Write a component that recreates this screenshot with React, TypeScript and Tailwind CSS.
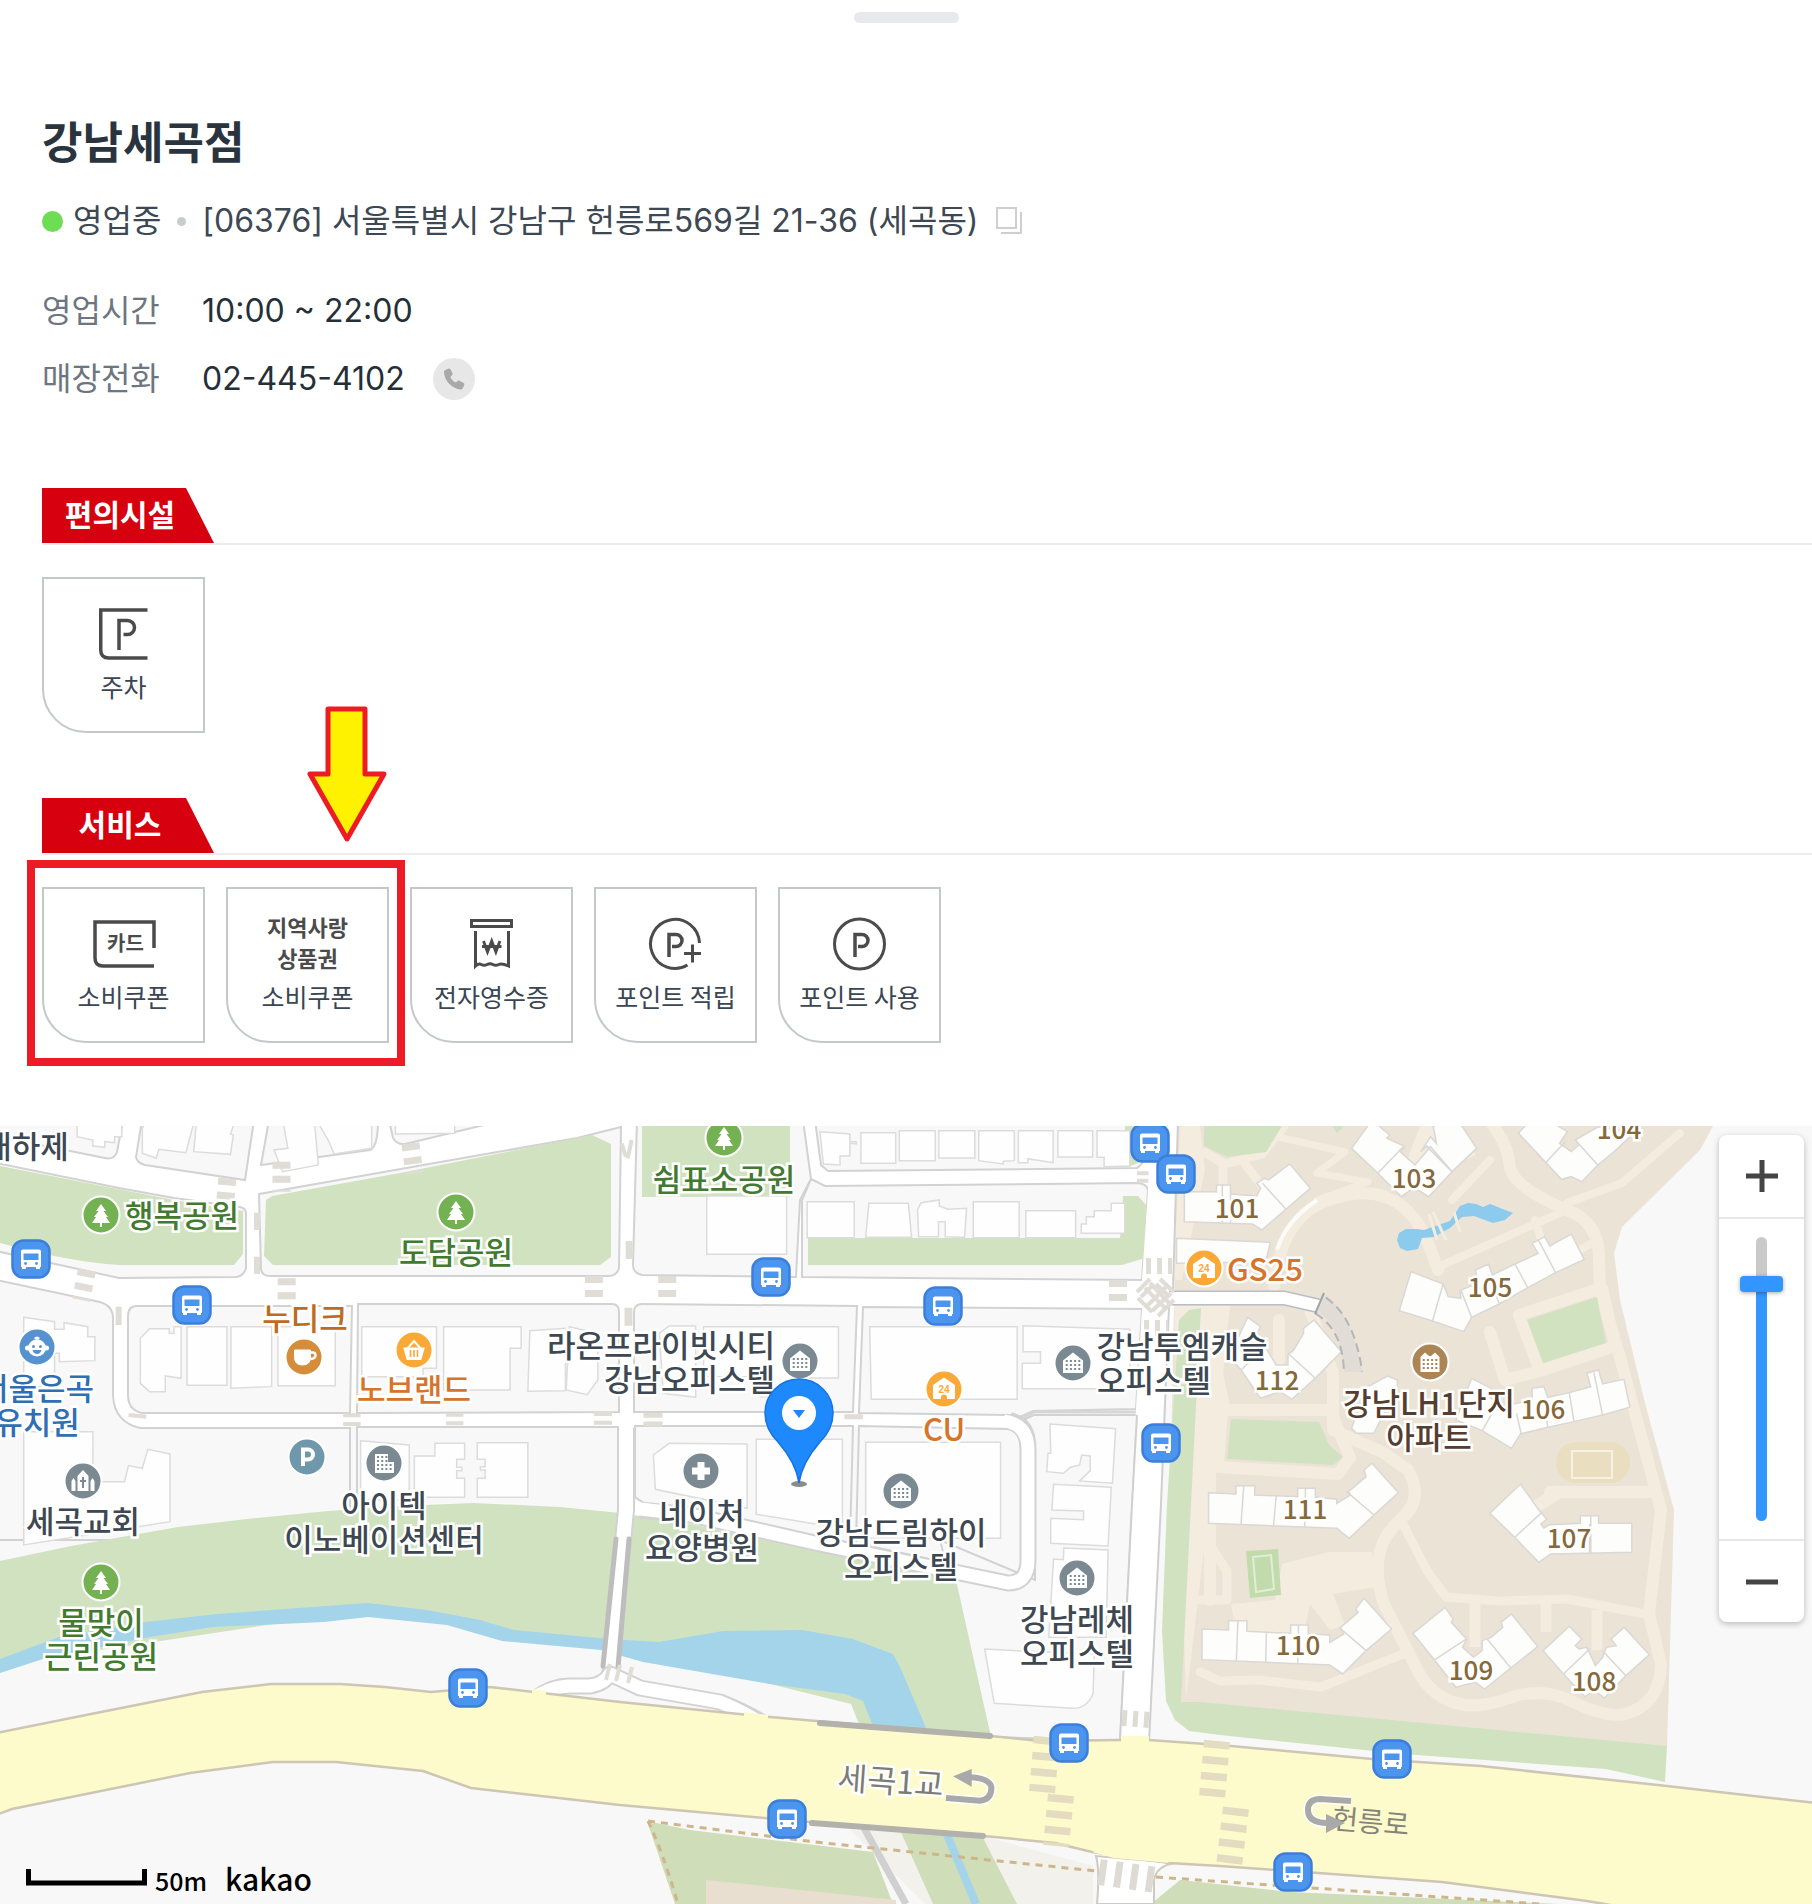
import type { ReactNode } from "react";

const SANS = "font-['Inter','Noto_Sans_CJK_KR',sans-serif]";
const KR = "font-['Noto_Sans_CJK_KR',sans-serif]";

/* ---------- store details ---------- */

function CopyIcon() {
  return (
    <svg viewBox="0 0 28 28" className="size-7" fill="none" stroke="#cfcfcf" strokeWidth="2">
      <rect x="2" y="1" width="19" height="20" />
      <path d="M26 5v21H6" />
    </svg>
  );
}

function PhoneIcon() {
  return (
    <svg viewBox="0 0 24 24" className="size-6" fill="#a9a9a9">
      <path d="M3 3.2 6.5 1.5c.7-.3 1.4 0 1.8.6l2.2 4.2c.3.6.2 1.300-.3 1.800L8.300 10c1 2.300 3 4.400 5.500 5.600l1.900-1.700c.5-.5 1.200-.6 1.800-.2l4.200 2.400c.6.4.900 1.100.6 1.800l-1.700 3.600c-.3.600-.9 1-1.600 1C10.200 22.200 2 13.600 2 4.800c0-.7.400-1.300 1-1.600Z" />
    </svg>
  );
}

function SectionHead({ title }: { title: string }) {
  return (
    <div className="h-[57px] border-b-2 border-[#ececee]">
      <h2
        className={`${KR} flex h-[55px] w-[172px] items-center justify-center bg-[#d7000f] pr-4 pb-1.5 text-[30px] leading-none font-bold whitespace-nowrap text-white [clip-path:polygon(0_0,144px_0,100%_100%,0_100%)]`}
      >
        {title}
      </h2>
    </div>
  );
}

function Card({ label, children }: { label: string; children: ReactNode }) {
  return (
    <li className="flex h-[156px] w-[163px] flex-col items-center rounded-bl-[44px] border-2 border-[#c5c8cb] pt-[23px]">
      <div className="flex h-[64px] items-center justify-center text-[#4b4b4b]">{children}</div>
      <span className={`${KR} mt-0.5 text-[25px] leading-9 whitespace-nowrap text-[#3a4653]`}>{label}</span>
    </li>
  );
}

const line = { fill: "none", stroke: "#4b4b4b", strokeWidth: 3.5 };

const ParkingIcon = () => (
  <svg viewBox="0 0 50 52" className="h-[52px] w-[50px]" {...line}>
    <path d="M48.500 2H1.750v40q0 8 8 8h38.750" />
    <path d="M20 42V12.500h8.500a7 7 0 0 1 0 14h-4" />
  </svg>
);

const CardIcon = () => (
  <div className="relative flex h-12 w-16 items-center justify-center">
    <svg viewBox="0 0 64 48" className="absolute inset-0" {...line}>
      <path d="M62 28V2H3v36q0 8 8 8h51" />
    </svg>
    <span className={`${KR} pb-0.5 pl-1 text-[20px] leading-none font-bold`}>카드</span>
  </div>
);

const VoucherIcon = () => (
  <div className={`${KR} pb-1 text-center text-[22px] leading-[31px] font-bold whitespace-nowrap`}>
    지역사랑
    <br />
    상품권
  </div>
);

const ReceiptIcon = () => (
  <svg viewBox="0 0 44 52" className="h-[52px] w-11" {...line} strokeWidth="3">
    <rect x="1.500" y="2.500" width="40" height="6" />
    <path d="M5.500 13v35q3-3 5.800-1.500t5.800 0 5.800 0 5.800 0T38.500 48V13" />
    <path d="m13.500 23 4 11 4.200-11 4.200 11 4-11M12 28.500h19.500" strokeWidth="2.800" />
  </svg>
);

const PointAddIcon = () => (
  <svg viewBox="0 0 56 54" className="h-[54px] w-14" {...line}>
    <path d="M51.500 26A24.500 24.500 0 1 0 39.500 48" strokeWidth="3" />
    <path d="M21 40V17.500h7a6 6 0 0 1 0 12h-4" />
    <path d="M44.500 27.500v18M36 36.500h17" strokeWidth="3" />
  </svg>
);

const PointIcon = () => (
  <svg viewBox="0 0 54 54" className="size-[54px]" {...line}>
    <circle cx="26.500" cy="27" r="25" strokeWidth="3" />
    <path d="M22 40V17.500h7a6 6 0 0 1 0 12h-4" />
  </svg>
);

/* ---------- map artwork ---------- */

function Tile({ x, y, kx, children }: { x: number; y: number; kx: number; children: ReactNode }) {
  return (
    <g transform={`translate(${x} ${y}) scale(${kx} .3333)`} className="[&_*]:[vector-effect:non-scaling-stroke]">
      {children}
    </g>
  );
}
const W = 0.3954;
const E = 0.3908;

const G = "#d1e2c1";
const bldg = { fill: "#fefefe", stroke: "#dcdcdc", strokeWidth: 1.500 };
const house = { fill: "#fdfdfc", stroke: "#dad8d4", strokeWidth: 1.500 };
const cross = { fill: "none", stroke: "#e0dcd6", strokeWidth: 18, strokeDasharray: "7 7" };

function MapArt() {
  return (
    <svg
      viewBox="0 1126 1812 778"
      preserveAspectRatio="xMinYMin slice"
      className="absolute inset-0 size-full"
      aria-hidden="true"
    >
      <rect y="1126" width="1812" height="778" fill="#f8f8f8" />
      <path d="M0 1126H1180V1300L1160 1427H0Z" fill="#fff" />

      {/* city blocks */}
      <g fill="#f8f8f8" stroke="#d2d2d2" strokeWidth="2">
        <path d="M-4 1120H123L117 1152Q114 1160 105 1158L55 1148L-4 1136Z" />
        <path d="M142 1120L136 1157Q137 1163 145 1165L245 1180L254 1120Z" />
        <path d="M269 1120L261 1165L370 1150Q378 1147 378 1120Z" />
        <path d="M389 1120L393 1138Q397 1145 405 1144L505 1120Z" />
        <path d="M-4 1163L119 1188L174 1198L240 1207Q246 1208 246 1214V1268Q244 1276 236 1277L119 1278L-4 1251Z" />
        <path d="M259 1194L395 1170L577 1138L621 1127L619 1268Q617 1276 608 1276H270Q261 1276 261 1268Z" />
        <path d="M637 1120H803L811 1179L800 1200L796 1277L642 1275Q633 1273 633 1265Z" />
        <path d="M815 1120L821 1165L828 1171L1137 1168Q1148 1163 1151 1120Z" />
        <path d="M811 1179L825 1186L1138 1183Q1147 1184 1148 1190L1142 1280L802 1277V1200Z" />
        <path d="M-4 1280L100 1302Q113 1306 113 1318V1395Q114 1422 140 1428H350V1540H-4Z" />
        <path d="M137 1306H352L350 1413H142Q128 1410 128 1395V1316Q128 1306 137 1306Z" />
        <path d="M358 1304H612Q619 1304 619 1312V1412L357 1413Z" />
        <path d="M634 1312Q634 1304 642 1304L857 1306L853 1412H634Z" />
        <path d="M863 1307L1142 1309L1136 1409L1033 1411L1020 1417L1010 1415L859 1413Z" />
        <path d="M357 1427H619V1540H357Z" />
        <path d="M635 1426H853L850 1543L750 1526L651 1508L635 1497Z" />
        <path d="M859 1426L1008 1429Q1021 1432 1021 1450V1565Q1018 1577 1007 1576L856 1543Z" />
        <path d="M1023 1420L1034 1415H1137L1120 1741L990 1737L940 1540L1035 1580V1445Z" />
      </g>

      {/* parks and river banks */}
      <g fill={G}>
        <path d="M0 1166L174 1200L243 1211V1254L234 1265H119Q70 1262 0 1243Z" />
        <path d="M266 1200L272 1196L400 1173L592 1135L611 1144V1257L600 1265H273L264 1256Z" />
        <path d="M642 1126H790V1197H642Z" />
        <path d="M808 1238H1120L1123 1196H1138L1146 1205L1145 1258L1122 1265H808Z" />
        <path d="M1125 1126H1146V1160L1125 1168Z" />
        <path d="M0 1561L71 1546L178 1527L257 1518L328 1511L400 1506L474 1503L560 1507L620 1513L632 1515L691 1524L815 1551L956 1580L991 1737L859 1724L851 1704L770 1684L600 1645L368 1610L0 1665Z" />
      </g>
      <path
        fill="#a3d4ea"
        d="M0 1659L59 1637L146 1622L217 1614L368 1603L427 1610L480 1620L514 1630L609 1639L659 1642L723 1631L802 1630L853 1639L893 1654L900 1667L927 1730L873 1726L863 1701L845 1694L770 1684L643 1662L601 1650L502 1641L447 1625L368 1617L324 1622L213 1627L150 1637L43 1659L0 1673Z"
      />

      {/* north-west buildings */}
      <Tile x={0} y={1120} kx={W}>
        <g {...bldg}>
          <path d="M195 0V50L235 60V78L265 82V65L290 68V50H308V0Z" />
          <path d="M372 0L360 25V100L395 115L402 88L470 98L492 0Z" />
          <path d="M497 0L490 95L583 103L590 45L583 42L595 0Z" />
          <path d="M715 0L728 85L693 90L715 155L805 135L795 0Z" />
          <path d="M800 0L830 60L845 102L940 85V0Z" />
          <path d="M1000 0V42L1150 40V0Z" />
          <path d="M60 592L138 605V628H162V608L222 620V650H240V722L150 725V700H138V800H60Z" />
          <path d="M378 626H428V640H440V620H458V775L418 768V815H378L355 790V655Z" />
          <path d="M473 620H574V796H473ZM584 620H687V800L584 805ZM703 620H848V797H703Z" />
          <path d="M915 620H1104V745H1070V770H915Z" />
          <path d="M1122 620H1318V685H1290V810H1122Z" />
          <path d="M1340 632L1430 625V812L1335 814ZM1440 620L1512 640V780L1485 824L1432 810Z" />
          <path d="M60 935H235V1085H315L325 1037L360 1045L374 988L430 1002V1205L60 1275Z" />
          <path d="M912 962L1035 975V1140H912ZM1048 1008H1100V970H1175V1018H1155V1042H1168V1052H1155V1075H1175V1132H1048ZM1207 968H1335V1132H1207V1075H1227V1050H1215V1040H1227V1018H1207Z" />
        </g>
        <g {...cross}>
          <path d="M575 175L570 240M712 125V215M1038 70L1048 160M220 450L205 540M725 475V552M1502 468V550" />
          <path d="M868 886H912M1128 884H1172M1502 882H1548M325 885L370 890" strokeDasharray="none" strokeWidth="4" />
          <path d="M650 278V330M650 410V462M300 560V615" strokeDasharray="none" strokeWidth="6" />
          <path d="M868 912H912M1128 910H1172M1502 908H1548" strokeDasharray="none" strokeWidth="4" />
        </g>
      </Tile>

      {/* north-centre buildings */}
      <Tile x={600} y={1120} kx={W}>
        <g {...bldg}>
          <path d="M556 35L632 42V65H648V72L632 70V108H607V135L565 132Z" />
          <path d="M660 38H748V130H660ZM757 32H848V122H757ZM857 32H948V114H857ZM958 32H1048V122L1020 124V132L958 122ZM1058 32H1146V128L1082 116V128H1058ZM1158 32H1246V111H1158ZM1257 32H1340V138L1275 140V112H1257Z" />
          <path d="M524 245H643V353H524ZM680 250H780L788 352H672ZM803 270L812 248L858 240V258L880 268L927 265L922 352L873 350V305H856V350H806ZM944 245H1060V353H944ZM1077 272H1203V353H1077ZM1217 312H1230V290H1250V272H1293V250H1327V340H1217Z" />
          <path d="M270 228H472V403H270Z" />
          <path d="M150 640L175 618H242V832L160 820ZM262 620H603V774H500V832L405 830V770H262Z" />
          <path d="M682 620H1055V838H686Z" />
          <path d="M1070 617L1340 628V806H1068V730H1114V695H1070Z" />
          <path d="M135 1005L175 970L372 972V1165L140 1108Z" />
          <path d="M395 958H613V1225L395 1183Z" />
          <path d="M672 967H1013V1255H672Z" />
          <path d="M1138 912L1304 926L1296 1090L1213 1083L1240 1052V1008L1218 1005L1213 1035L1190 1042L1172 1060L1130 1055L1133 1000H1140Z" />
          <path d="M1147 1093L1293 1102L1285 1278L1140 1270V1195L1223 1199V1173L1143 1170Z" />
        </g>
        <g {...cross}>
          <path d="M170 468V550M1310 480V565" />
          <path d="M65 390H82M62 590H82" strokeDasharray="none" />
          <path d="M70 908V985M110 886H158M110 912H158M618 890H665" strokeDasharray="none" strokeWidth="5" />
          <path d="M55 70L65 110M80 60L70 115M1358 160H1410M1358 182H1400" strokeDasharray="none" strokeWidth="4" />
        </g>
      </Tile>

      {/* side streets */}
      <g fill="none" strokeLinejoin="round">
        <path d="M640 1510L691 1515L815 1543L1008 1583Q1028 1583 1028 1560V1450Q1028 1424 1010 1421" stroke="#d2d2d2" strokeWidth="17" />
        <path d="M632 1508L691 1515L815 1543L1008 1583Q1028 1583 1028 1560V1450Q1028 1424 1004 1421" stroke="#fff" strokeWidth="13" />
        <path d="M626 1428V1510L610 1678" stroke="#d2d2d2" strokeWidth="18" />
        <path d="M626 1422V1510L610 1678" stroke="#fff" strokeWidth="14" />
        <path d="M616 1539L603 1666M629 1539L618 1667" stroke="#bdbdbd" strokeWidth="5" strokeLinecap="round" />
        <path d="M536 1698Q552 1686 570 1686H590Q604 1684 610 1674L640 1688L720 1702Q745 1712 765 1724" stroke="#d2d2d2" strokeWidth="17" />
        <path d="M530 1700Q552 1686 570 1686H590Q604 1684 610 1674L640 1688L720 1702Q745 1712 765 1726" stroke="#fff" strokeWidth="13" />
        <path d="M610 1664L606 1680M620 1665L616 1681M632 1667L628 1683" stroke="#e0dcd6" strokeWidth="4" />
        <path d="M1021 1419L1034 1412H1136" stroke="#d6d6d6" strokeWidth="3" />
      </g>

      {/* estate on the east side */}
      <path fill="#ebe3d6" d="M1178 1126H1713L1700 1150L1622 1227L1614 1253L1620 1300L1645 1403L1674 1510L1667 1748L1170 1705V1504L1174 1300Z" />
      <path fill="#f3ecdf" d="M1180 1126H1200L1205 1170L1182 1280H1174ZM1174 1306H1230L1210 1500L1186 1700Z" />
      <path
        fill="#d1e2c1"
        d="M1167 1504L1162 1631L1166 1701L1175 1720L1189 1731L1220 1735L1403 1754L1606 1769L1665 1782L1667 1746L1200 1702H1181L1191 1504L1201 1308L1189 1310L1179 1320Z"
      />
      <g fill="none" stroke="#f3ecdf" strokeWidth="12" strokeLinejoin="round" strokeLinecap="round">
        <path d="M1274 1287Q1280 1225 1317 1205Q1395 1170 1427 1240L1438 1270" />
        <path d="M1278 1137L1345 1152L1317 1173L1368 1182L1317 1200" strokeWidth="7" />
        <path d="M1204 1152L1225 1164L1262 1154L1284 1126M1223 1164V1195M1245 1164L1265 1190" strokeWidth="9" />
        <path d="M1489 1120Q1509 1145 1510 1168Q1515 1188 1567 1210Q1600 1222 1599 1260L1600 1293L1618 1350L1653 1480L1661 1510L1649 1614L1661 1664Q1660 1705 1625 1714Q1605 1718 1571 1701Q1545 1688 1515 1696Q1450 1722 1420 1675L1384 1604Q1366 1550 1400 1520Q1425 1500 1408 1470L1384 1453L1333 1430V1373L1310 1310" />
        <path d="M1680 1133L1622 1183L1567 1203M1438 1267L1562 1212M1490 1160L1452 1200M1535 1220L1548 1262M1598 1240L1570 1255" strokeWidth="8" />
        <path d="M1403 1524L1427 1571L1446 1597L1500 1601L1567 1599L1645 1614" strokeWidth="9" />
        <path d="M1475 1600V1647M1546 1604V1632M1597 1610V1650" strokeWidth="11" strokeLinecap="butt" />
        <path d="M1200 1530L1227 1571V1600H1200M1200 1672L1220 1681L1259 1680L1321 1687L1403 1654" strokeWidth="9" />
        <path d="M1222 1410H1330L1350 1458L1338 1474L1218 1467ZM1210 1470V1600" />
        <path d="M1519 1315L1602 1288L1615 1346L1540 1371ZM1490 1332L1505 1380L1540 1371M1279 1320V1360M1215 1365L1225 1410" />
        <path d="M1550 1492H1655M1560 1492L1530 1510" />
      </g>
      <path fill="#f3ecdf" d="M1282 1564L1329 1552H1372L1376 1587L1333 1594L1345 1625L1330 1630L1310 1604L1305 1627L1290 1650L1235 1627L1231 1604L1275 1600ZM1476 1155L1452 1126H1420L1405 1165L1440 1172Z" />
      <path fill="#d1e2c1" d="M1204 1126H1282L1266 1152L1227 1157L1204 1146ZM1332 1126H1344L1337 1133ZM1231 1419L1319 1422L1329 1445L1343 1457L1333 1465L1227 1459ZM1527 1320L1597 1297L1606 1343L1543 1363Z" />
      <path fill="#c1dbac" d="M1246 1551L1278 1549L1281 1595L1250 1598Z" />
      <path fill="none" stroke="#e2edd6" strokeWidth="2" d="M1253 1557L1271 1555L1274 1589L1256 1592Z" />
      <rect x="1556" y="1442" width="74" height="41" rx="20" fill="#e9dfc0" />
      <rect x="1572" y="1451" width="40" height="27" fill="none" stroke="#f6f1e2" strokeWidth="2" />
      <path
        fill="#8ccbee"
        d="M1397 1240L1399 1233L1406 1229L1417 1229L1424 1230L1450 1221L1460 1206L1468 1203L1476 1204L1483 1207L1490 1204L1513 1213L1505 1220L1493 1223L1474 1216L1462 1217L1450 1228L1434 1237L1422 1238L1418 1249L1407 1251L1400 1248Z"
      />
      <path d="M1429 1214L1437 1240M1433 1212L1446 1240M1454 1212L1460 1232" fill="none" stroke="#f3ecdf" strokeWidth="3" />
      <path d="M1317 1200Q1285 1222 1277 1250" fill="none" stroke="#fdfbf7" strokeWidth="4" />

      <Tile x={1200} y={1120} kx={E}>
        <g {...house}>
          <path d="M440 0L485 45L478 55L525 80L512 95L550 135L590 80L645 155L585 230L565 215L545 205L515 230L455 160L388 85ZM590 50L605 70L597 20L620 0H660L708 85L645 155L580 78L565 95Z" />
          <path d="M455 160L520 80M645 155L580 78" />
          <path d="M845 0L815 40L925 178L950 170L977 185L1018 135L1060 95L1110 40L1020 20L960 60L970 75L950 95L920 70L940 35L890 0Z" />
          <path d="M883 130L935 65M960 60L1018 135" />
          <path d="M-40 215H42V195H78V222L145 228L155 205L145 190L165 175L175 180L230 132L282 205L158 330L135 312L-40 305Z" />
          <path d="M57 195V308M78 222V308M160 190L220 268" />
          <path d="M-60 355L180 367L168 425L-60 430Z" />
          <path d="M540 455L622 492L635 530L668 535L665 512L710 490L705 450L738 432L748 465L806 432L865 400L850 370L882 350L895 378L950 342L983 418L910 458L840 502L766 552L695 592L675 635L595 603L510 572Z" />
          <path d="M622 492L595 603M668 512L695 592M738 465L766 552M806 432L838 502M865 358L910 458" />
          <path d="M122 592L155 620L145 640L195 735L225 735V705L240 690L265 640V625L292 600L362 695L295 775L235 838L205 815L155 835L105 750L75 710Z" />
          <path d="M105 750L150 700M225 700L295 775" />
          <path d="M480 768L505 780V800L445 940H400L388 925L400 880L430 850V800Z" />
          <path d="M695 775L745 805L740 830L770 860L850 840V805L880 800L890 832L945 818L1000 800L990 760L1020 750L1030 792L1085 778L1100 862L1030 885L957 905L890 922L820 942L797 985L722 932L655 900Z" />
          <path d="M755 865L722 932M810 880L822 942M880 840L890 922M945 818L957 905M1008 758L1030 885" />
          <path d="M22 1118L92 1122V1097H140V1125L250 1130V1105H295V1132L350 1138V1150L385 1125L380 1115L425 1070L420 1050L440 1030L508 1118L445 1185L382 1255L350 1225L22 1210Z" />
          <path d="M112 1097L105 1212M195 1128L188 1218M270 1105L268 1222M375 1115L445 1185" />
        </g>
        <path d="M302 572L322 525Q390 590 415 755H368Q365 630 302 572Z" fill="#e1dcd6" />
        <path d="M322 533Q395 590 415 755M295 580Q365 630 368 750" fill="none" stroke="#b4b6ba" strokeWidth="2" strokeDasharray="9 5" />
      </Tile>
      <Tile x={1200} y={1504} kx={E}>
        <g {...house}>
          <path d="M820 -60L742 28L805 100L867 175L897 150L1105 145V58H1020V35H973V58L895 62L880 72L872 60L887 45L865 15Z" />
          <path d="M805 100L875 25M1000 35V148M997 60V148" />
          <path d="M5 375L73 378V350H120V382L232 388V363H277V390L332 393V415L368 390L358 372L405 325L398 315L420 283L490 375L425 440L365 510L332 483L5 467Z" />
          <path d="M97 350L93 470M170 385L168 475M252 363L250 480M358 372L425 440" />
          <path d="M627 310L648 345L643 355L682 405L672 430L700 460L722 440V410L745 400L775 370L770 355L797 330L864 428L795 492L728 555L705 535L655 550L600 468L545 388Z" />
          <path d="M682 405L600 468M735 405L795 492" />
          <path d="M945 367L977 405L960 425L970 435L990 430L1000 455L1012 485L1030 460L1040 430L1065 425L1052 405L1085 370L1150 452L1090 515L1035 582L1010 560L985 578L930 510L878 440Z" />
          <path d="M997 435L930 510M1030 440L1090 515" />
        </g>
      </Tile>

      {/* avenue on the right */}
      <path d="M1150 1126H1177L1173 1288L1169 1309L1163 1410L1161 1504L1149 1745H1120L1132 1504L1136 1409L1142 1309V1280L1148 1190Z" fill="#fff" />
      <path d="M1178 1120L1173 1290M1169 1306L1161 1504L1149 1742M1137 1415L1132 1504L1120 1741" fill="none" stroke="#cfcfcf" strokeWidth="2" />
      <path d="M1169 1298H1284L1319 1306" fill="none" stroke="#b9bdc5" strokeWidth="15" />
      <path d="M1160 1298H1284L1319 1306" fill="none" stroke="#fff" strokeWidth="12" />
      <path d="M1324 1293L1315 1314" stroke="#9fa3aa" strokeWidth="2" />
      <g fill="none" stroke="#e0dcd6">
        <path d="M1146 1266H1172M1144 1328H1168" strokeWidth="16" strokeDasharray="5 6" />
        <path d="M1137 1292L1150 1279M1141 1297L1154 1284M1160 1279L1174 1292M1156 1284L1170 1297M1138 1298L1152 1312M1174 1300L1158 1316" strokeWidth="4" />
        <path d="M1145 1288L1166 1309M1150 1283L1170 1304M1166 1287L1147 1306M1171 1293L1152 1311" strokeWidth="4" />
      </g>

      {/* lower park and paths */}
      <path d="M850 1830L983 1836L1093 1866V1904H925Z" fill="#f2f1ec" />
      <path fill="#cfddb9" d="M647 1821L690 1830L873 1852L893 1904H675ZM900 1830L983 1838L1017 1904H933ZM1151 1904L1180 1880L1290 1892L1560 1904Z" />
      <path fill="#e8dfd0" d="M706 1880L896 1900V1904H706Z" />
      <path d="M945 1830L976 1904" stroke="#a3d4ea" strokeWidth="8" />
      <path d="M864 1828L906 1904" stroke="#d0d0d0" strokeWidth="7" />
      <path d="M648 1821L815 1842L1096 1871M1156 1877L1540 1904M648 1821Q662 1850 678 1904" fill="none" stroke="#cdb68a" strokeWidth="3" strokeDasharray="7 6" />

      {/* main road */}
      <path d="M1096 1856Q1100 1870 1097 1904H1154V1880Q1156 1866 1175 1863Z" fill="#fff" stroke="#cfcac0" strokeWidth="2" />
      <path
        fill="#fdfacb"
        stroke="#cdc6b4"
        strokeWidth="2.500"
        d="M-4 1733L91 1714L202 1692L271 1684H340L385 1687L431 1692L490 1687L620 1702L770 1717L991 1736L1039 1741L1120 1740H1149L1220 1745L1372 1759L1481 1766L1667 1786L1816 1803V1910H1640L1587 1901L1442 1882L1220 1866L1169 1863L1092 1852L1055 1843L984 1836L810 1822L620 1805L471 1788L423 1771L336 1762H273L190 1773L12 1809L-4 1815Z"
      />
      <path d="M1092 1852L1114 1858L1169 1863L1160 1852L1110 1846ZM1121 1736H1149V1746H1121ZM532 1689L546 1691L546 1696L532 1695ZM744 1712L768 1715V1720H744Z" fill="#fdfacb" />
      <path d="M820 1723L990 1736M812 1823L983 1836" stroke="#b2b1ab" strokeWidth="6" strokeLinecap="round" />
      <g fill="none" stroke="#e3dcc0" strokeWidth="26" strokeDasharray="7.500 8.500">
        <path d="M1047 1737L1042 1792M1061 1795L1056 1846" />
        <path d="M1217 1741L1212 1798M1236 1808L1229 1866" />
      </g>
      <g fill="none" stroke="#dedbd5" strokeWidth="16" strokeDasharray="5 6">
        <path d="M1122 1718L1150 1720" />
        <path d="M1099 1872L1156 1880" strokeWidth="26" strokeDasharray="7 9" />
      </g>

      {/* U-turn mark and south blocks */}
      <Tile x={600} y={1504} kx={W}>
        <path d="M875 882L960 890Q990 888 990 850Q985 822 935 820" fill="none" stroke="#fff" strokeWidth="9" />
        <path d="M875 882L960 890Q990 888 990 850Q985 822 935 820" fill="none" stroke="#a9a9a9" strokeWidth="6" />
        <path d="M893 817L940 795V848Z" fill="#a9a9a9" />
        <path d="M973 435L1085 442L1250 450L1247 570Q1230 615 1195 613L997 598Z" {...bldg} />
        <path d="M1173 132L1285 138L1280 400H1135L1147 165L1172 167Z" {...bldg} />
      </Tile>

      {/* scale bar */}
      <path d="M28.500 1869V1883H144.500V1869" fill="none" stroke="#000" strokeWidth="5" />
    </svg>
  );
}

/* ---------- map markers ---------- */

const MAP_TOP = 1126;
/* the Korean face sits low in its line box */
const TEXT_TOP = MAP_TOP + 1;

function At({ x, y, top = MAP_TOP, children }: { x: number; y: number; top?: number; children: ReactNode }) {
  return (
    <div className="absolute -translate-x-1/2 -translate-y-1/2" style={{ left: x, top: y - top }}>
      {children}
    </div>
  );
}

function Bus() {
  return (
    <svg viewBox="0 0 40 40" className="size-10">
      <rect x="1.500" y="1.500" width="37" height="37" rx="11" fill="#4b95ef" stroke="#3b7fdb" strokeWidth="2.500" />
      <path fill="#fff" d="M12 10.500h16q2 0 2 2V28h-1v2h-4v-2H15v2h-4v-2h-1V12.500q0-2 2-2Z" />
      <path fill="#4b95ef" d="M12.500 14.500h15v6.500h-15z" />
      <circle cx="14.500" cy="24.500" r="1.400" fill="#4b95ef" />
      <circle cx="25.500" cy="24.500" r="1.400" fill="#4b95ef" />
    </svg>
  );
}

const windows = (c: string, x: number, y: number, cols: number, rows: number) =>
  Array.from({ length: cols * rows }, (_, i) => (
    <rect key={i} x={x + (i % cols) * 4.200} y={y + Math.floor(i / cols) * 4} width="2" height="2" fill={c} />
  ));

type Kind = "tree" | "cup" | "basket" | "child" | "parking" | "tower" | "church" | "hospital" | "office" | "store" | "apartment";

const COLORS: Record<Kind, string> = {
  tree: "#74b152",
  cup: "#d58d3b",
  basket: "#fba936",
  child: "#5592cf",
  parking: "#7098ad",
  tower: "#7b8a92",
  church: "#7b8a92",
  hospital: "#7b8a92",
  office: "#7b8a92",
  store: "#fba936",
  apartment: "#ab8553",
};

function Glyph({ kind }: { kind: Kind }) {
  const c = COLORS[kind];
  switch (kind) {
    case "tree":
      return <path fill="#fff" d="m20 9 5 7h-2.500l4.500 6h-2l4 6h-8v4h-2v-4h-8l4-6h-2l4.500-6H15Z" />;
    case "cup":
      return (
        <g fill="none" stroke="#fff">
          <path fill="#fff" d="M10.500 13h16v7q0 8-8 8t-8-8Z" />
          <path strokeWidth="2.500" d="M26 15.500h2.500q3 0 3 3t-5 3.500" />
        </g>
      );
    case "basket":
      return (
        <g stroke="#fff" fill="none" strokeWidth="2">
          <path d="m13 19 7-8 7 8" />
          <path fill="#fff" d="M10.500 18.500h19l-3 10.500h-13Z" />
          <path stroke={c} strokeWidth="1.600" d="M16.500 20v7M20 20v7M23.500 20v7" />
        </g>
      );
    case "child":
      return (
        <g>
          <ellipse cx="20" cy="21" rx="9" ry="8.500" fill="#fff" />
          <circle cx="10.500" cy="21" r="2.500" fill="#fff" />
          <circle cx="29.500" cy="21" r="2.500" fill="#fff" />
          <path d="M18 12q2-2 4 0" stroke="#fff" strokeWidth="3" fill="none" />
          <circle cx="16.500" cy="19.500" r="1.500" fill={c} />
          <circle cx="23.500" cy="19.500" r="1.500" fill={c} />
          <path d="M15.500 23h9q-1 4-4.500 4t-4.500-4Z" fill={c} />
        </g>
      );
    case "parking":
      return <path d="M16 29V12.500h5a5 5 0 0 1 0 10h-5" fill="none" stroke="#fff" strokeWidth="4" />;
    case "tower":
      return (
        <g>
          <path fill="#fff" d="M11 11h13v8h6v11H11Z" />
          {windows(c, 13, 13, 3, 4)}
          <rect x="25.600" y="21" width="2" height="2" fill={c} />
          <rect x="25.600" y="25" width="2" height="2" fill={c} />
        </g>
      );
    case "church":
      return (
        <g fill="#fff">
          <path d="m20 9 5.500 6v15h-11V15Z" />
          <path d="M8.500 30V20l2-3 2 3v10ZM27.500 30V20l2-3 2 3v10Z" />
          <path d="M20 16v11M17 20h6" stroke={c} strokeWidth="2" />
        </g>
      );
    case "hospital":
      return <path fill="#fff" d="M16.500 11h7v5.500H29v7h-5.500V29h-7v-5.500H11v-7h5.500Z" />;
    case "office":
      return (
        <g>
          <path fill="#fff" d="m20 9.500 10 8V30H10V17.500Z" />
          {windows(c, 12.700, 17, 4, 3)}
        </g>
      );
    case "store":
      return (
        <g>
          <path fill="#fff" d="m20 8.500 11 7.500v14h-8v-1.500a3 3 0 0 0-6 0V30H9V16Z" />
          <text x="20" y="24" textAnchor="middle" fontSize="10" fontWeight="700" fill={c} fontFamily="Liberation Sans">
            24
          </text>
        </g>
      );
    case "apartment":
      return (
        <g>
          <path fill="#fff" d="m15 10.500 4 3.500h2l4-3.500 4.500 4.500v15h-19V15Z" />
          {windows(c, 12.700, 17, 4, 3)}
        </g>
      );
  }
}

function Badge({ kind }: { kind: Kind }) {
  return (
    <svg viewBox="0 0 40 40" className="size-10">
      <circle cx="20" cy="20" r="18.500" fill={COLORS[kind]} stroke="#fff" strokeWidth="2" />
      <Glyph kind={kind} />
    </svg>
  );
}

const HALO = "[paint-order:stroke_fill] [-webkit-text-stroke:5px_#ffffff]";

const BUSES = [
  [31, 1259], [192, 1305], [771, 1277], [943, 1306], [1150, 1143], [1176, 1174],
  [1161, 1443], [468, 1688], [1069, 1743], [787, 1819], [1392, 1759], [1293, 1872],
];

const BADGES: [Kind, number, number][] = [
  ["tree", 101, 1215], ["tree", 456, 1212], ["tree", 724, 1138], ["tree", 101, 1582],
  ["cup", 304, 1357], ["basket", 414, 1350], ["child", 37, 1347], ["parking", 307, 1457],
  ["tower", 384, 1463], ["church", 83, 1481], ["hospital", 701, 1471], ["office", 800, 1361],
  ["office", 901, 1491], ["office", 1073, 1363], ["office", 1077, 1578], ["store", 944, 1389],
  ["store", 1204, 1268], ["apartment", 1430, 1362],
];

const GREEN = "text-[#427a30]";
const SLATE = "text-[#3d4852]";
const ORANGE = "text-[#d5742a]";

const LABELS: [string, number, number, string][] = [
  ["래하제", 26, 1146, SLATE],
  ["행복공원", 182, 1215, GREEN],
  ["도담공원", 456, 1252, GREEN],
  ["쉼표소공원", 724, 1179, GREEN],
  ["물맞이\n근린공원", 101, 1639, GREEN],
  ["누디크", 305, 1318, "text-[#bf6a1c]"],
  ["노브랜드", 414, 1389, ORANGE],
  ["CU", 944, 1429, ORANGE],
  ["GS25", 1265, 1269, ORANGE],
  ["서울은곡\n유치원", 37, 1405, "text-[#2f6fb3]"],
  ["세곡교회", 83, 1521, SLATE],
  ["아이텍\n이노베이션센터", 384, 1522, SLATE],
  ["네이처\n요양병원", 702, 1530, SLATE],
  ["강남투엠캐슬", 1182, 1346, SLATE],
  ["오피스텔", 1154, 1380, SLATE],
  ["강남드림하이\n오피스텔", 901, 1549, SLATE],
  ["강남레체\n오피스텔", 1077, 1636, SLATE],
  ["강남LH1단지\n아파트", 1429, 1420, "text-[#553d30]"],
];

const NUMBERS: [string, number, number][] = [
  ["101", 1237, 1208], ["103", 1414, 1178], ["104", 1619, 1129], ["105", 1490, 1287],
  ["106", 1543, 1409], ["107", 1569, 1538], ["108", 1594, 1681], ["109", 1471, 1670],
  ["110", 1298, 1645], ["111", 1305, 1509], ["112", 1277, 1380],
];

function ZoomControl() {
  return (
    <div className="absolute top-[9px] right-2 flex w-[85px] flex-col rounded-lg bg-white shadow-[0_2px_6px_rgba(0,0,0,0.25)]">
      <button type="button" aria-label="확대" className="flex h-[84px] items-center justify-center border-b-2 border-[#e6e6e6]">
        <svg viewBox="0 0 32 32" className="size-8" stroke="#444" strokeWidth="5">
          <path d="M0 16h32M16 0v32" />
        </svg>
      </button>
      <div className="relative flex h-[322px] flex-col items-center border-b-2 border-[#e6e6e6] py-[18px]">
        <div className="h-12 w-[11px] rounded-t-full bg-[#c9c9c9]" />
        <div className="w-[11px] flex-1 rounded-b-full bg-[#3396ff]" />
        <div className="absolute top-[57px] h-4 w-[43px] rounded bg-[#3396ff] shadow-[0_1px_4px_rgba(0,0,0,0.35)]" />
        <input
          type="range"
          aria-label="지도 확대 단계"
          min={1}
          max={14}
          defaultValue={12}
          className="absolute inset-y-4 w-11 cursor-pointer opacity-0 [direction:rtl] [writing-mode:vertical-lr]"
        />
      </div>
      <button type="button" aria-label="축소" className="flex h-[81px] items-center justify-center">
        <svg viewBox="0 0 32 32" className="size-8" stroke="#444" strokeWidth="5">
          <path d="M0 16h32" />
        </svg>
      </button>
    </div>
  );
}

function StoreMap() {
  return (
    <section aria-label="지도" className={`${KR} relative mt-[83px] min-h-[778px] flex-1 overflow-hidden bg-[#f8f8f8]`}>
      <MapArt />
      {NUMBERS.map(([t, x, y]) => (
        <At key={t} x={x} y={y} top={TEXT_TOP}>
          <span className={`${HALO} block text-[26px] leading-8 font-medium text-[#85693a]`}>{t}</span>
        </At>
      ))}
      <At x={891} y={1780} top={TEXT_TOP}>
        <span className={`${HALO} block rotate-4 text-[32px] leading-9 whitespace-nowrap text-[#7c7c74]`}>세곡1교</span>
      </At>
      <At x={1371} y={1821} top={TEXT_TOP}>
        <span className="block rotate-5 text-[28px] leading-9 whitespace-nowrap text-[#85857c]">헌릉로</span>
      </At>
      <svg viewBox="0 0 50 44" className="absolute top-[667px] left-[1303px] h-11 w-[50px]">
        <path d="M48 8 17 6Q5 6 5 17Q5 30 25 30" fill="none" stroke="#fff" strokeWidth="9" />
        <path d="M48 8 17 6Q5 6 5 17Q5 30 25 30" fill="none" stroke="#a9a9a9" strokeWidth="6" />
        <path d="M23 21 42 30 23 40Z" fill="#a9a9a9" />
      </svg>
      {BUSES.map(([x, y]) => (
        <At key={`${x}-${y}`} x={x} y={y}>
          <Bus />
        </At>
      ))}
      {BADGES.map(([k, x, y]) => (
        <At key={`${k}-${x}`} x={x} y={y}>
          <Badge kind={k} />
        </At>
      ))}
      {LABELS.map(([t, x, y, tone]) => (
        <At key={t} x={x} y={y} top={TEXT_TOP}>
          <span className={`${HALO} ${tone} block text-center text-[31px] leading-[34px] font-medium whitespace-pre`}>{t}</span>
        </At>
      ))}
      <At x={661} y={1362} top={TEXT_TOP}>
        <span className={`${HALO} ${SLATE} block text-right text-[31px] leading-[34px] font-medium whitespace-pre`}>
          {"라온프라이빗시티\n강남오피스텔"}
        </span>
      </At>
      <At x={799} y={1433}>
        <svg viewBox="0 0 72 112" className="h-28 w-[72px]">
          <ellipse cx="36" cy="107" rx="8" ry="3" fill="#000" opacity=".45" />
          <path
            d="M36 106C34 92 28 80 15 65Q2 52 2 36a34 34 0 0 1 68 0q0 16-13 29C44 80 38 92 36 106Z"
            fill="#1e88fd"
            stroke="#1673e0"
            strokeWidth="1.500"
          />
          <circle cx="36" cy="36" r="17" fill="#fff" />
          <path d="M30 33h12l-6 8Z" fill="#1e88fd" />
        </svg>
      </At>
      <div className="absolute bottom-1 left-[155px] flex items-baseline gap-[18px] font-medium text-black">
        <span className="text-[25px] leading-10">50m</span>
        <span className="text-[30px] leading-10">kakao</span>
      </div>
      <ZoomControl />
    </section>
  );
}

/* ---------- page ---------- */

export default function App() {
  return (
    <main className={`${SANS} flex min-h-screen flex-col bg-white pt-3`}>
      <div className="h-[11px] w-[105px] self-center rounded-full bg-[#e8e9ec]" />

      <div className="mt-[87px] pl-[42px]">
        <h1 className={`${KR} text-[44px] leading-[60px] font-bold text-[#2a343e]`}>강남세곡점</h1>

        <div className="mt-[29px] flex h-11 items-center text-[32px] leading-none whitespace-nowrap text-[#3d4853]">
          <span className="size-[21px] rounded-full bg-[#6fdc56]" />
          <span className="ml-[10px]">영업중</span>
          <span className="mx-4 size-[9px] rounded-full bg-[#c9cbcf]" />
          <address className="not-italic">[06376] 서울특별시 강남구 헌릉로569길 21-36 (세곡동)</address>
          <button type="button" aria-label="주소 복사" className="ml-4">
            <CopyIcon />
          </button>
        </div>

        <dl className="mt-[46px] grid grid-cols-[160px_1fr] gap-y-6 text-[32px] leading-[44px] whitespace-nowrap text-[#252f38]">
          <dt className="text-[#6d7680]">영업시간</dt>
          <dd>10:00 ~ 22:00</dd>
          <dt className="text-[#6d7680]">매장전화</dt>
          <dd className="flex items-center gap-7">
            02-445-4102
            <a
              href="tel:02-445-4102"
              aria-label="전화 걸기"
              className="flex size-[42px] items-center justify-center rounded-full bg-[#e7e7e7]"
            >
              <PhoneIcon />
            </a>
          </dd>
        </dl>

        <section className="mt-[87px]">
          <SectionHead title="편의시설" />
          <ul className="mt-8 flex gap-[21px]">
            <Card label="주차">
              <ParkingIcon />
            </Card>
          </ul>
        </section>

        <section className="relative mt-[65px]">
          <SectionHead title="서비스" />
          <ul className="mt-8 flex gap-[21px]">
            <Card label="소비쿠폰">
              <CardIcon />
            </Card>
            <Card label="소비쿠폰">
              <VoucherIcon />
            </Card>
            <Card label="전자영수증">
              <ReceiptIcon />
            </Card>
            <Card label="포인트 적립">
              <PointAddIcon />
            </Card>
            <Card label="포인트 사용">
              <PointIcon />
            </Card>
          </ul>
          <div className="pointer-events-none absolute top-[62px] -left-[15px] h-[206px] w-[378px] border-8 border-[#ed1c24]" />
          <svg viewBox="0 0 80 138" className="pointer-events-none absolute -top-[93px] left-[265px] h-[138px] w-20">
            <path
              d="M21 4h37v65h19L40 134 3 69h18Z"
              fill="#fff200"
              stroke="#ed1c24"
              strokeWidth="5"
              strokeLinejoin="round"
            />
          </svg>
        </section>
      </div>

      <StoreMap />
    </main>
  );
}
